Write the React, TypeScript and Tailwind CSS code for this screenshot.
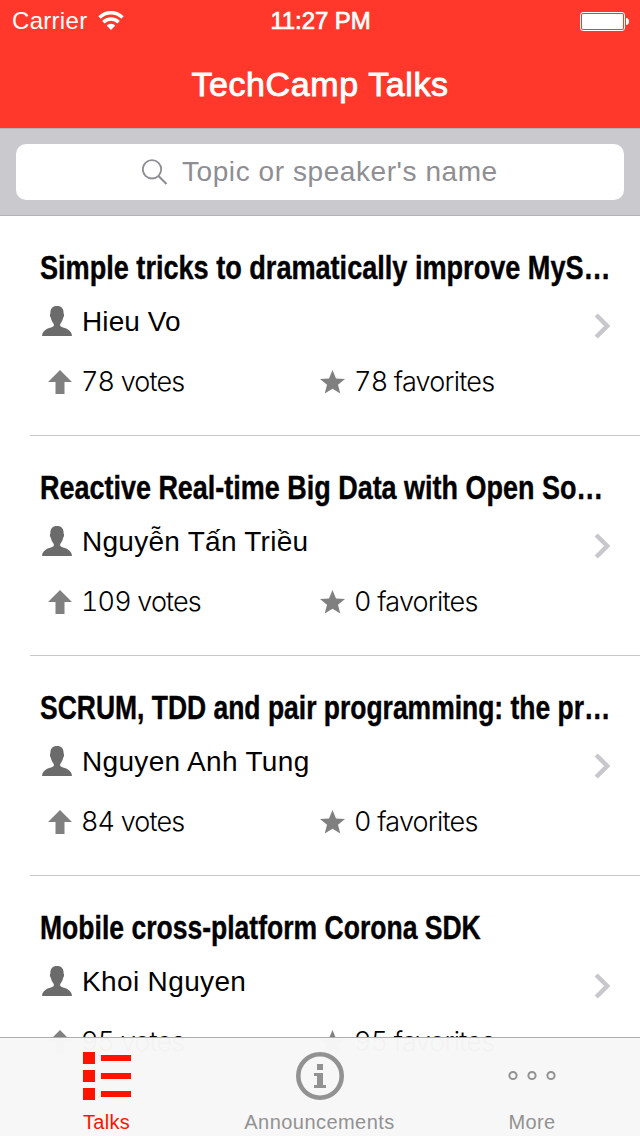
import React from "react";

type Talk = { title: string; titleClass: string; speaker: string; speakerClass: string; votes: number; favorites: number };

const talks: Talk[] = [
  { title: "Simple tricks to dramatically improve MyS…", titleClass: "scale-x-[0.821]", speaker: "Hieu Vo", speakerClass: "tracking-[0.1px]", votes: 78, favorites: 78 },
  { title: "Reactive Real-time Big Data with Open So…", titleClass: "scale-x-[0.817]", speaker: "Nguyễn Tấn Triều", speakerClass: "tracking-[0.27px]", votes: 109, favorites: 0 },
  { title: "SCRUM, TDD and pair programming: the pr…", titleClass: "scale-x-[0.802]", speaker: "Nguyen Anh Tung", speakerClass: "tracking-[0.33px]", votes: 84, favorites: 0 },
  { title: "Mobile cross-platform Corona SDK", titleClass: "scale-x-[0.804]", speaker: "Khoi Nguyen", speakerClass: "tracking-[0.36px]", votes: 95, favorites: 95 },
];

function Wifi() {
  return (
    <svg width="26" height="20" viewBox="0 0 26 20" fill="none" stroke="#fff" strokeWidth="3.400">
      <path d="M1.500 6.500a16.300 16.300 0 0 1 23 0" />
      <path d="M5.400 11.200a10.700 10.700 0 0 1 15.200 0" />
      <path d="M13 19l-4.400-4.500a6.300 6.300 0 0 1 8.800 0z" fill="#fff" stroke="none" />
    </svg>
  );
}

function StatusBar() {
  return (
    <div className="grid h-10 grid-cols-3 items-center pl-3 pr-[11px] text-white">
      <div className="flex items-center gap-[11px]">
        <span className="whitespace-nowrap text-[24px] leading-[42px] tracking-[0.3px]">Carrier</span>
        <Wifi />
      </div>
      <span className="text-center text-[24px] leading-[42px] tracking-[-0.1px] [-webkit-text-stroke:0.7px_white]">11:27 PM</span>
      <svg className="ml-auto" width="49" height="19" viewBox="0 0 49 19" fill="#fff">
        <rect x="0.5" y="0.5" width="44" height="18" rx="2.5" fill="none" stroke="#fff" />
        <rect x="2" y="2" width="41" height="15" rx="1" />
        <path d="M46 6q3 .3 3 3.5T46 13z" />
      </svg>
    </div>
  );
}

function TalkRow({ talk }: { talk: Talk }) {
  return (
    <li className="ml-[30px] h-[220px] shrink-0 border-b border-[#c8c7cc] pl-[10px] pt-[34px]">
      <h2 className={"h-9 w-fit origin-left whitespace-nowrap text-[33px] font-bold leading-9 [-webkit-text-stroke:0.4px_black] " + talk.titleClass}>{talk.title}</h2>
      <div className="mt-[18px] flex h-9 items-center pr-[29px]">
        <svg className="-mt-[2px] ml-[2px]" width="30" height="30" viewBox="0 0 30 30" fill="#6b6b6b">
          <path d="M15 0C19.500 0 21.800 2.600 21.600 7.500C22.500 8.300 22.100 10.700 21.100 12C20.700 14.300 19.500 16.500 18.200 18V20C20.500 22.300 29.500 22 30 30H0C.5 22 9.500 22.300 11.800 20V18C10.500 16.500 9.300 14.300 8.900 12C7.900 10.700 7.500 8.300 8.400 7.500C8.200 2.600 10.500 0 15 0z" />
        </svg>
        <span className={"ml-[10px] whitespace-nowrap text-[28px] leading-9 " + talk.speakerClass}>{talk.speaker}</span>
        <svg className="ml-auto mt-[7px]" width="17" height="26" viewBox="0 0 17 26" fill="none" stroke="#c7c7cc" strokeWidth="4.500">
          <path d="M2.200 2L13.200 13L2.200 24" />
        </svg>
      </div>
      <div className="mt-6 flex h-9 items-center font-['Inter','Liberation_Sans',sans-serif] text-[27px] font-light leading-9 tabular-nums">
        <div className="flex w-[280px] items-center">
          <svg className="ml-2" width="24" height="24" viewBox="0 0 24 24" fill="#808080"><path d="M12 0L24 12H16.500V24H7.500V12H0z" /></svg>
          <span className="ml-[9px] tracking-[-0.85px]">{talk.votes} votes</span>
        </div>
        <svg width="25" height="24" viewBox="0 0 25 24" fill="#808080"><path d="M12.500 0L16 8.500L25 9L18 14.800L20.300 23.500L12.500 18.700L4.700 23.500L7 14.800L0 9L9 8.500z" /></svg>
        <span className="ml-[9px] tracking-[-0.78px]">{talk.favorites} favorites</span>
      </div>
    </li>
  );
}

function TabBar() {
  return (
    <nav className="absolute inset-x-0 bottom-0 flex h-[99px] border-t border-[#adadad] bg-[#f7f7f7]/98 text-[20px] leading-6 text-[#929292]">
      <div className="flex w-[213px] flex-col items-center pt-[14px] text-[#ff1300]">
        <svg width="48" height="48" viewBox="0 0 48 48" fill="currentColor">
          <path d="M0 0h12v12H0zM18 3h30v6H18zM0 18h12v12H0zM18 21h30v6H18zM0 36h12v12H0zM18 39h30v6H18z" />
        </svg>
        <span className="mt-[10px] tracking-[0.3px]">Talks</span>
      </div>
      <div className="flex w-[213px] flex-col items-center pt-[14px]">
        <svg width="48" height="48" viewBox="0 0 48 48" fill="currentColor">
          <circle cx="24" cy="24" r="21.700" fill="none" stroke="currentColor" strokeWidth="4.600" />
          <path d="M21 12h6v6h-6zM18 21h9v12h3v3H18v-3h3v-9h-3z" />
        </svg>
        <span className="mt-[10px] tracking-[0.45px]">Announcements</span>
      </div>
      <div className="flex w-[212px] flex-col items-center pt-[14px]">
        <svg width="48" height="48" viewBox="0 0 48 48" fill="none" stroke="currentColor" strokeWidth="2">
          <circle cx="5" cy="23.500" r="3.600" /><circle cx="24" cy="23.500" r="3.600" /><circle cx="43" cy="23.500" r="3.600" />
        </svg>
        <span className="mt-[10px] tracking-[0.4px]">More</span>
      </div>
    </nav>
  );
}

export default function App() {
  return (
    <div className="relative flex h-[1136px] w-[640px] flex-col overflow-hidden bg-white font-['Liberation_Sans',sans-serif] text-black">
      <header className="h-32 shrink-0 bg-[#ff382b]">
        <StatusBar />
        <h1 className="mt-6 text-center text-[34px] leading-10 tracking-[0.6px] text-white [-webkit-text-stroke:0.9px_white]">TechCamp Talks</h1>
      </header>
      <div className="h-[88px] shrink-0 border-y border-[#b2b2b4] bg-[#c9c9ce] px-4 pt-[15px]">
        <div className="flex h-14 items-center rounded-[10px] bg-white pl-[126px] text-[#8e8e93]">
          <svg width="26" height="26" viewBox="0 0 26 26" fill="none" stroke="currentColor" strokeWidth="1.800">
            <circle cx="10" cy="10.300" r="9.200" /><path d="M16.500 17l8 8" strokeWidth="2.200" />
          </svg>
          <span className="ml-[14px] whitespace-nowrap text-[28px] leading-9 tracking-[0.57px]">Topic or speaker's name</span>
        </div>
      </div>
      <ul className="flex flex-col">
        {talks.map((talk) => <TalkRow key={talk.title} talk={talk} />)}
      </ul>
      <TabBar />
    </div>
  );
}
